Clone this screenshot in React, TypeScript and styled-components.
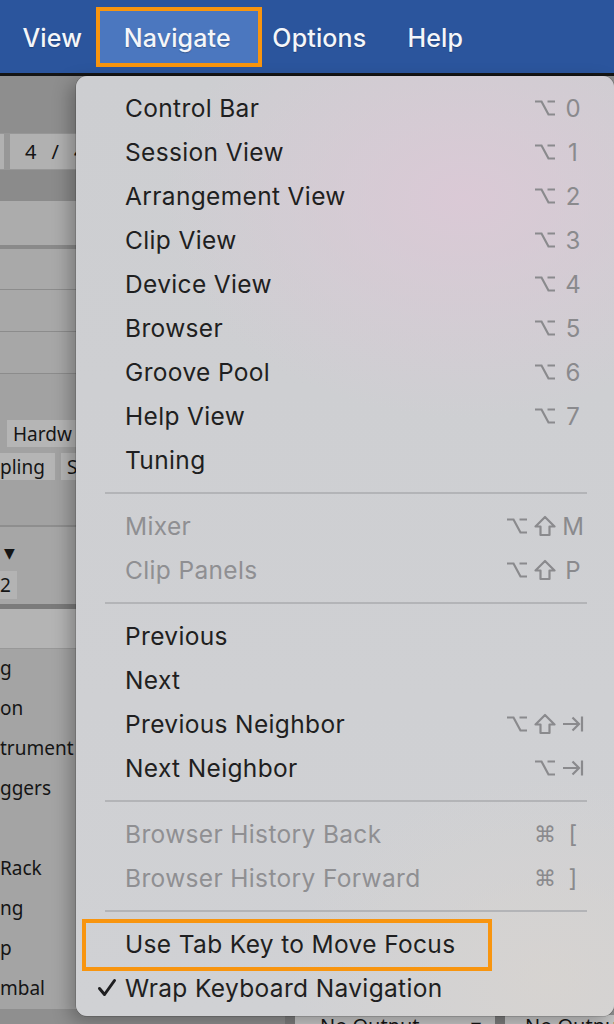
import styled, { createGlobalStyle } from 'styled-components';

const GlobalStyle = createGlobalStyle`
  html, body {
    margin: 0;
    padding: 0;
    background: #a4a4a4;
  }
  * { box-sizing: border-box; }
`;

const Page = styled.div`
  position: relative;
  width: 614px;
  height: 1024px;
  overflow: hidden;
  font-family: 'Inter', 'Noto Sans', sans-serif;
`;

/* ---------- top menu bar ---------- */

const MenuBar = styled.div`
  display: flex;
  align-items: center;
  height: 76px;
  padding: 1px 0 0 2px;
  background: #2b559d;
  border-bottom: 3px solid #151515;
`;

const MenuTitle = styled.div<{ $active?: boolean }>`
  display: flex;
  align-items: center;
  height: 52px;
  padding: ${p => (p.$active ? '2px 27px 0 24px' : '2px 20.5px 0')};
  margin: ${p => (p.$active ? '0 -6px 0 -3px' : '0')};
  font-size: 25px;
  font-weight: 500;
  color: #f4f6fa;
  letter-spacing: 0.15px;
  background: ${p => (p.$active ? '#4b77bf' : 'transparent')};
  outline: ${p => (p.$active ? '4px solid #f8950f' : 'none')};
  text-shadow: 0 1px 1px rgba(0, 0, 0, 0.25);
`;

/* ---------- the app behind the menu ---------- */

const Backdrop = styled.div`
  display: flex;
  flex-direction: column;
  font-family: 'Noto Sans', 'DejaVu Sans', sans-serif;
  font-size: 19px;
  color: #151515;
`;

const Strip = styled.div<{ $h: number; $bg: string; $line?: string }>`
  display: flex;
  align-items: center;
  gap: 6px;
  height: ${p => p.$h}px;
  background: ${p => p.$bg};
  border-bottom: ${p => (p.$line ? `1px solid ${p.$line}` : 'none')};
`;

const Tag = styled.div<{ $w: number; $pad?: number }>`
  display: flex;
  align-items: center;
  height: 27px;
  width: ${p => p.$w}px;
  flex: none;
  padding-left: ${p => p.$pad ?? 6}px;
  background: #b5b5b5;
  white-space: nowrap;
  overflow: hidden;
`;

const TagRow = styled.div`
  display: flex;
  flex-direction: column;
  gap: 6px;
  padding-top: 46px;
  height: 153px;
  background: #a2a2a2;
  border-bottom: 2px solid #8e8e8e;
`;

const TagLine = styled.div<{ $indent: number }>`
  display: flex;
  gap: 6px;
  padding-left: ${p => p.$indent}px;
`;

const SigBox = styled.div`
  display: flex;
  align-items: center;
  gap: 15px;
  height: 35px;
  width: 70px;
  padding-left: 15px;
  background: #b1b1b1;
  font-size: 20px;
  white-space: nowrap;
`;

const Stub = styled.div`
  width: 4px;
  height: 35px;
  background: #b1b1b1;
`;

const ChooserArea = styled.div`
  display: flex;
  flex-direction: column;
  height: 82px;
  padding-top: 8px;
  background: #a6a6a6;
  border-bottom: 5px solid #7b7b7b;
`;

const Arrow = styled.div`
  padding-left: 4px;
  height: 36px;
  font-size: 14px;
  line-height: 36px;
`;

const NumBox = styled.div`
  width: 17px;
  height: 28px;
  line-height: 28px;
  background: #b3b3b3;
`;

const ListItem = styled.div`
  height: 40px;
  line-height: 38px;
  white-space: nowrap;
`;

const BottomRow = styled.div`
  display: flex;
  height: 40px;
  background: #8f8f8f;
  padding-left: 285px;
  overflow: hidden;
`;

const OutBox = styled.div<{ $pad: number }>`
  display: flex;
  flex: none;
  justify-content: space-between;
  width: 210px;
  height: 30px;
  margin-top: 6px;
  padding: 0 14px 0 ${p => p.$pad}px;
  background: #c6c6c6;
  border-left: 10px solid #7d7d7d;
  font-size: 20px;
  line-height: 22px;
  white-space: nowrap;
`;

/* ---------- dropdown ---------- */

const Dropdown = styled.div`
  position: absolute;
  top: 76px;
  left: 76px;
  width: 538px;
  padding: 10px 0 6px;
  border-radius: 11px;
  background:
    radial-gradient(ellipse 300px 220px at 72% 13%, rgba(219, 201, 214, 0.95), rgba(219, 201, 214, 0) 100%),
    radial-gradient(ellipse 260px 200px at 88% 96%, rgba(216, 212, 208, 0.8), rgba(216, 212, 208, 0) 100%),
    linear-gradient(180deg, #cdced1 0%, #d0d1d4 100%);
  box-shadow: -6px 6px 18px rgba(0, 0, 0, 0.28), 0 0 0 0.5px rgba(0, 0, 0, 0.25);
`;

const Row = styled.div<{ $disabled?: boolean }>`
  position: relative;
  display: flex;
  align-items: center;
  height: 44px;
  padding: 0 30px 0 21px;
  font-size: 24.5px;
  letter-spacing: 0.35px;
  color: ${p => (p.$disabled ? '#8f8f92' : '#1f1f21')};
`;

const Check = styled.span`
  display: flex;
  align-items: center;
  width: 28px;
  flex: none;
  svg { display: block; }
`;

const Label = styled.span`
  flex: 1;
  white-space: nowrap;
`;

const Keys = styled.span`
  display: flex;
  align-items: center;
  gap: 6px;
`;

const Key = styled.span`
  display: flex;
  align-items: center;
  justify-content: center;
  width: 22px;
  height: 30px;
  font-family: 'DejaVu Sans', sans-serif;
  font-size: 22px;
  letter-spacing: 0;
  color: #8a8a8d;
  svg { display: block; }
`;

const Digit = styled(Key)`
  font-family: 'Inter', sans-serif;
  font-size: 24px;
`;

const Separator = styled.div`
  height: 22px;
  display: flex;
  align-items: center;
  padding: 0 27px 0 29px;
  &::after {
    content: '';
    flex: 1;
    height: 2px;
    background: #b3b4b7;
  }
`;

const Callout = styled.div`
  position: absolute;
  left: 6px;
  top: -3px;
  width: 410px;
  height: 52px;
  border: 4px solid #f8950f;
`;

const stroke = {
  fill: 'none',
  stroke: '#8a8a8d',
  strokeWidth: 2.2,
  strokeLinejoin: 'miter' as const,
};

const OptionIcon = () => (
  <svg width="22" height="20" viewBox="0 0 22 20">
    <path d="M1 3.5 H7.5 L14.5 16.5 H21 M13.5 3.5 H21" {...stroke} />
  </svg>
);

const ShiftIcon = () => (
  <svg width="22" height="22" viewBox="0 0 22 22">
    <path d="M11 2 L20.5 11.5 H15.5 V20 H6.5 V11.5 H1.5 Z" {...stroke} strokeLinejoin="round" />
  </svg>
);

const TabIcon = () => (
  <svg width="22" height="20" viewBox="0 0 22 20">
    <path d="M1 10 H17 M10.5 3.5 L17 10 L10.5 16.5 M20 2.5 V17.5" {...stroke} />
  </svg>
);

const CheckIcon = () => (
  <svg width="20" height="20" viewBox="0 0 20 20">
    <path d="M2.5 10.5 L7.5 16.5 L17.5 2.5" fill="none" stroke="#1f1f21" strokeWidth="3" strokeLinecap="round" strokeLinejoin="round" />
  </svg>
);

type Item = {
  label: string;
  keys?: string[];
  disabled?: boolean;
  checked?: boolean;
  callout?: boolean;
};

const groups: Item[][] = [
  [
    { label: 'Control Bar', keys: ['opt', '0'] },
    { label: 'Session View', keys: ['opt', '1'] },
    { label: 'Arrangement View', keys: ['opt', '2'] },
    { label: 'Clip View', keys: ['opt', '3'] },
    { label: 'Device View', keys: ['opt', '4'] },
    { label: 'Browser', keys: ['opt', '5'] },
    { label: 'Groove Pool', keys: ['opt', '6'] },
    { label: 'Help View', keys: ['opt', '7'] },
    { label: 'Tuning' },
  ],
  [
    { label: 'Mixer', keys: ['opt', 'shift', 'M'], disabled: true },
    { label: 'Clip Panels', keys: ['opt', 'shift', 'P'], disabled: true },
  ],
  [
    { label: 'Previous' },
    { label: 'Next' },
    { label: 'Previous Neighbor', keys: ['opt', 'shift', 'tab'] },
    { label: 'Next Neighbor', keys: ['opt', 'tab'] },
  ],
  [
    { label: 'Browser History Back', keys: ['⌘', '['], disabled: true },
    { label: 'Browser History Forward', keys: ['⌘', ']'], disabled: true },
  ],
  [
    { label: 'Use Tab Key to Move Focus', callout: true },
    { label: 'Wrap Keyboard Navigation', checked: true },
  ],
];

const renderKey = (k: string, i: number) => {
  if (k === 'opt') return <Key key={i}><OptionIcon /></Key>;
  if (k === 'shift') return <Key key={i}><ShiftIcon /></Key>;
  if (k === 'tab') return <Key key={i}><TabIcon /></Key>;
  if (k === '⌘') return <Key key={i}>{k}</Key>;
  return <Digit key={i}>{k}</Digit>;
};

const MenuRow = ({ item }: { item: Item }) => (
  <Row $disabled={item.disabled}>
    {item.callout && <Callout />}
    <Check>{item.checked && <CheckIcon />}</Check>
    <Label>{item.label}</Label>
    {item.keys && <Keys>{item.keys.map(renderKey)}</Keys>}
  </Row>
);

const listItems = ['g', 'on', 'trument', 'ggers', '', 'Rack', 'ng', 'p', 'mbal'];

export default function App() {
  return (
    <Page>
      <GlobalStyle />
      <MenuBar>
        <MenuTitle>View</MenuTitle>
        <MenuTitle $active>Navigate</MenuTitle>
        <MenuTitle>Options</MenuTitle>
        <MenuTitle>Help</MenuTitle>
      </MenuBar>

      <Backdrop>
        <Strip $h={57} $bg="#8e8e8e" />
        <Strip $h={37} $bg="#979797">
          <Stub />
          <SigBox>
            <span>4</span>
            <span>/</span>
            <span>4</span>
          </SigBox>
        </Strip>
        <Strip $h={31} $bg="#8b8b8b" />
        <Strip $h={44} $bg="#acacac" />
        <Strip $h={4} $bg="#8a8a8a" />
        <Strip $h={41} $bg="#a9a9a9" $line="#8c8c8c" />
        <Strip $h={42} $bg="#a8a8a8" $line="#8c8c8c" />
        <Strip $h={42} $bg="#a7a7a7" $line="#8c8c8c" />
        <TagRow>
          <TagLine $indent={7}>
            <Tag $w={75}>Hardw</Tag>
          </TagLine>
          <TagLine $indent={0}>
            <Tag $w={55} $pad={0}>pling</Tag>
            <Tag $w={20}>S</Tag>
          </TagLine>
        </TagRow>
        <ChooserArea>
          <Arrow>▼</Arrow>
          <NumBox>2</NumBox>
        </ChooserArea>
        <Strip $h={40} $bg="#b4b4b4" $line="#989898" />
        {listItems.map((t, i) => (
          <ListItem key={i}>{t}</ListItem>
        ))}
        <BottomRow>
          <OutBox $pad={25}>
            <span>No Output</span>
            <span>▾</span>
          </OutBox>
          <OutBox $pad={20}>
            <span>No Output</span>
          </OutBox>
        </BottomRow>
      </Backdrop>

      <Dropdown>
        {groups.map((g, gi) => (
          <div key={gi}>
            {gi > 0 && <Separator />}
            {g.map(item => (
              <MenuRow key={item.label} item={item} />
            ))}
          </div>
        ))}
      </Dropdown>
    </Page>
  );
}
